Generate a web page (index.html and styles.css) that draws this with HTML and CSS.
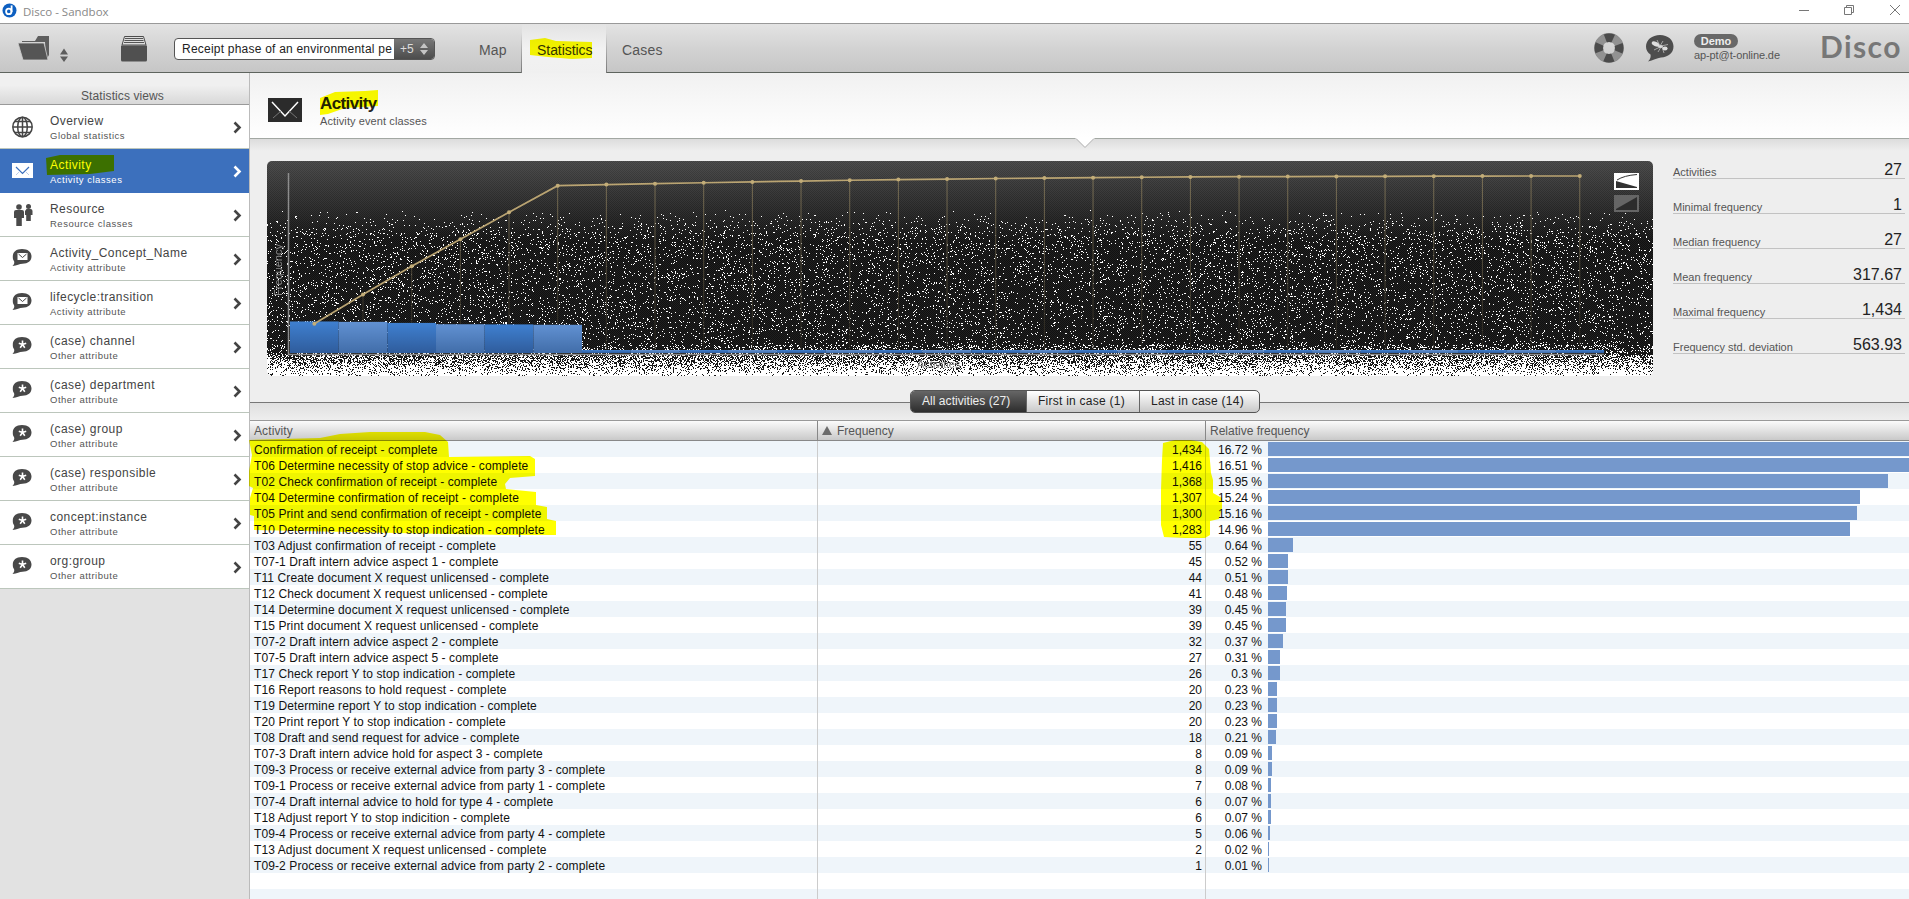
FILE: index.html
```html
<!DOCTYPE html>
<html lang="en">
<head>
<meta charset="utf-8">
<title>Disco - Sandbox</title>
<link rel="stylesheet" href="styles.css">
</head>
<body>
<div class="app">
  <header class="titlebar">
    <svg class="app-icon" width="15" height="15" viewBox="0 0 15 15"><circle cx="7.5" cy="7.5" r="7" fill="#0d5fc0"/><circle cx="6.8" cy="8.4" r="2.7" fill="none" stroke="#fff" stroke-width="1.8"/><path d="M9.6 2.4V9" stroke="#fff" stroke-width="1.8"/></svg>
    <span class="app-name">Disco - Sandbox</span>
    <svg class="win-controls" width="112" height="12" viewBox="0 0 112 12" fill="none" stroke="#777"><path d="M0 6.5H10"/><path d="M45.500 3.500H52.500V10.500H45.500ZM47.500 3.500V1.500H54.500V8.500H52.500"/><path d="M91 1L101 11M101 1L91 11"/></svg>
  </header>

  <div class="toolbar">
    <svg class="ic-folder" width="52" height="28" viewBox="0 0 52 28"><path d="M4 6H17L20 1H31V20L28 25L27 7H4Z" fill="#5e5e5e"/><path d="M0 8H26L30 25H5Z" fill="#555" stroke="#cfcfcf" stroke-width=".8"/><path d="M42 19.500L46 13.500L50 19.500ZM42 21.500L46 27L50 21.500Z" fill="#5c5c5c"/></svg>
    <svg class="ic-box" width="26" height="26" viewBox="0 0 26 26"><path d="M3.500 .5H22.500L25 9H1Z" fill="#ddd" stroke="#4c4c4c"/><path d="M4 2.500H22M3.500 4.500H22.500M3 6.500H23" stroke="#555"/><path d="M0 9.500H26V24Q26 25.500 24.500 25.500H1.500Q0 25.500 0 24Z" fill="#505050"/></svg>
    <div class="dataset"><span class="dataset-name">Receipt phase of an environmental pe</span><span class="dataset-more">+5<svg width="8" height="12" viewBox="0 0 8 12"><path d="M0 5L4 0L8 5ZM0 7L4 12L8 7Z" fill="#c4c4c4"/></svg></span></div>
    <nav class="tabs"><span class="tab tab-map">Map</span><span class="tab tab-on">Statistics</span><span class="tab tab-cases">Cases</span></nav>
    <svg class="ic-help" width="30" height="30" viewBox="0 0 30 30"><circle cx="15" cy="15" r="14.300" fill="none" stroke="#8b8b8b" stroke-width="1.200"/><circle cx="15" cy="15" r="10.200" fill="none" stroke="#919191" stroke-width="8"/><circle cx="15" cy="15" r="10.200" fill="none" stroke="#4b4b4b" stroke-width="8.600" stroke-dasharray="8.010 8.010" stroke-dashoffset="4.005"/></svg>
    <svg class="ic-bug" width="28" height="27" viewBox="0 0 28 27"><path d="M14 0C22 0 27.500 5 27.500 11.500C27.500 18 22 22 15 22.500C11 23 7 25.500 2 26.500C4.500 24 5 21.500 4.500 19.500C1.500 17.500 0 15 0 11.500C0 5 6 0 14 0Z" fill="#4d4d4d"/><g fill="#ddd"><ellipse cx="9.500" cy="9" rx="4" ry="2.200" transform="rotate(24 9.500 9)"/><ellipse cx="14.500" cy="11.500" rx="2.500" ry="1.500"/><ellipse cx="19" cy="13.500" rx="2.600" ry="2"/></g><path d="M14 11L11 5M14 11L17 6M15 11L22 9.500M14 12L8 15M15 12L12 17M16 12L18 18" stroke="#ccc" stroke-width=".7"/></svg>
    <div class="account"><b class="badge">Demo</b><span class="mail">ap-pt@t-online.de</span></div>
    <div class="logo">Disco</div>
  </div>

  <div class="body">
    <aside class="sidebar">
      <div class="side-head">Statistics views</div>
      <div id="views"></div>
    </aside>
    <main class="main">
      <div class="head">
        <svg class="head-icon" width="34" height="24" viewBox="0 0 34 24"><path d="M0 0H34V24H0Z" fill="#2b2b2b"/><path d="M4 4L17 18L30 4" stroke="#fff" stroke-width="1.500" fill="none"/><path d="M5 20L13 13M29 20L21 13" stroke="#888" stroke-width=".8"/></svg>
        <div class="head-text"><h1>Activity</h1><p>Activity event classes</p></div>
        <svg class="notch" width="20" height="11" viewBox="0 0 20 11"><path d="M0 0H20L10 10Z" fill="#fff"/><path d="M1 .5L10 9.500L19 .5" fill="none" stroke="#a5a5a5"/></svg>
      </div>
      <div class="overview">
        <div class="chart"><canvas id="grain" width="1386" height="215"></canvas><svg id="plot" width="1386" height="215" viewBox="267 161 1386 215"></svg></div>
        <dl class="stats">
          <div><dt>Activities</dt><dd>27</dd></div>
          <div><dt>Minimal frequency</dt><dd>1</dd></div>
          <div><dt>Median frequency</dt><dd>27</dd></div>
          <div><dt>Mean frequency</dt><dd>317.67</dd></div>
          <div><dt>Maximal frequency</dt><dd>1,434</dd></div>
          <div><dt>Frequency std. deviation</dt><dd>563.93</dd></div>
        </dl>
      </div>
      <div class="switch"><i class="rule"></i><div class="segments"><span class="seg seg-on">All activities (27)</span><span class="seg">First in case (1)</span><span class="seg">Last in case (14)</span></div><i class="rule"></i></div>
      <div class="table">
        <div class="row thead"><span class="c1">Activity</span><span class="c2"><svg width="10" height="9" viewBox="0 0 10 9"><path d="M0 9L5 0L10 9Z" fill="#6b6b6b"/></svg>Frequency</span><span class="c3">Relative frequency</span></div>
        <div id="rows"></div>
      </div>
    </main>
  </div>

  <svg class="marker" width="1909" height="899" viewBox="0 0 1909 899" fill="#ff0">
    <path d="M530 40L545 38L556 41L592 42V58L572 59L548 57L530 55Z"/>
    <path d="M320 98L335 92L365 91L378 90V106L345 108L328 114L320 115Z"/>
    <path d="M46 158L60 155H114V171L90 174L47 175Z"/>
    <path d="M249 440L320 438L340 434L370 432H425L440 435L448 442L449 457L530 456L535 459V476L510 478L505 484L506 489L536 492V505L547 507V519L556 521V535H505L395 533L254 530V516L250 515V498L253 488L249 486V471L252 455Z"/>
    <path d="M1163 443L1175 440H1190L1202 442L1209 449L1211 473L1213 480V493L1222 498V508L1219 519L1210 521V535L1205 538H1185L1164 537L1161 525V490L1162 460Z"/>
  </svg>
</div>
<script src="app.js"></script>
</body>
</html>
```

FILE: styles.css
```css
* { box-sizing: border-box; }
body { margin: 0; background: #fff; font-family: "Liberation Sans", Arial, sans-serif; color: #444; overflow: hidden; }
.app { position: relative; width: 1909px; height: 899px; overflow: hidden; display: flex; flex-direction: column; }
svg, canvas { display: block; flex: none; }

.titlebar { height: 23px; display: flex; align-items: center; padding-left: 2px; }
.app-icon { margin-top: -2px; }
.app-name { margin-left: 6px; font: 11.500px/16px "Open Sans", sans-serif; color: #888; }
.win-controls { margin: -4px -2px 0 auto; }

.toolbar { height: 50px; display: flex; border-top: 1px solid #999; border-bottom: 1px solid #5e645e; background: linear-gradient(#e3e3e3, #d3d3d3 50%, #c6c6c6); }
.ic-folder { margin: 11px 0 0 18px; }
.ic-box { margin: 12px 0 0 51px; }
.dataset { margin: 14px 0 0 27px; width: 261px; height: 22px; display: flex; border: 1px solid #555; border-radius: 4px; overflow: hidden; background: #fff; font-size: 12px; line-height: 21px; color: #222; }
.dataset-name { flex: none; width: 219px; padding-left: 7px; white-space: nowrap; letter-spacing: .22px; }
.dataset-more { flex: 1; display: flex; align-items: center; gap: 6px; padding-left: 6px; color: #ddd; font-size: 12px; background: linear-gradient(#777, #4c4c4c); }
.tabs { display: flex; margin-left: 43px; height: 49px; font-size: 14px; line-height: 52px; letter-spacing: .2px; color: #555; }
.tab-map { width: 44px; padding-left: 1px; border-right: 1px solid #777; border-image: linear-gradient(transparent 20%, #777) 1; }
.tab-on { width: 84px; padding-left: 15px; color: #333; background: linear-gradient(#e3e3e3, #f2f2f2 50%, #f0f0f0); letter-spacing: -.05px; }
.tab-cases { padding-left: 15px; border-left: 1px solid #777; border-image: linear-gradient(transparent 20%, #777) 1; }
.ic-help { margin: 9px 0 0 auto; }
.ic-bug { margin: 11px 0 0 22px; }
.account { margin: 10px 0 0 20px; width: 126px; display: flex; flex-direction: column; align-items: flex-start; font-size: 11px; color: #555; }
.badge { width: 44px; height: 14px; border-radius: 7px; background: #686868; color: #eee; text-align: center; line-height: 14px; }
.mail { line-height: 14px; letter-spacing: -.1px; }
.logo { width: 89px; font: bold 30px/48px Lato, sans-serif; color: #777; letter-spacing: 1.400px; margin-top: -2px; }

.body { flex: 1; display: flex; min-height: 0; }
.sidebar { width: 249px; background: #e2e2e2; }
.side-head { height: 32px; line-height: 46px; padding-right: 4px; text-align: center; font-size: 12px; letter-spacing: .1px; color: #555; background: linear-gradient(#f0f0f0 40%, #d8d8d8); border-bottom: 1px solid #999; }
.view { height: 44px; display: flex; background: #fff; border-bottom: 1px solid #bcc6bc; }
.view-icon { width: 50px; padding: 11px 0 0 12px; }
.view-text { width: 183px; padding-top: 8px; }
.view-text b { display: block; font-weight: normal; font-size: 12px; line-height: 16px; letter-spacing: .45px; white-space: nowrap; color: #444; }
.view-text small { display: block; font-size: 9.500px; line-height: 14px; letter-spacing: .5px; color: #555; }
.chev { margin-top: 16px; }
.view-on { background: #3c70bd; border-color: #3c70bd; }
.view-on .view-text b, .view-on .view-text small { color: #fff; }

.main { flex: 1; min-width: 0; border-left: 1px solid #bbb; background: #eee; display: flex; flex-direction: column; }
.head { position: relative; height: 66px; border-bottom: 1px solid #a3a8a3; background: linear-gradient(#f1f1f1, #fff); display: flex; }
.head-icon { margin: 25px 0 0 18px; }
.head-text { margin: 20px 0 0 18px; }
.head-text h1 { margin: 0; font-size: 17px; line-height: 22px; letter-spacing: -.6px; color: #222; }
.head-text p { margin: 0; font-size: 11px; line-height: 13px; letter-spacing: .1px; color: #555; }
.notch { position: absolute; left: 825px; top: 65px; }
.overview { height: 251px; padding: 22px 4px 0 17px; display: flex; justify-content: space-between; background: linear-gradient(#dcdcdc, #eee 12px); }
.chart { position: relative; width: 1386px; height: 215px; border-radius: 5px; overflow: hidden; }
.chart svg { position: absolute; left: 0; top: 0; }
.stats { margin: 0; width: 232px; }
.stats div { height: 35px; padding-bottom: 17px; display: flex; justify-content: space-between; align-items: center; position: relative; background: linear-gradient(#c2c2c2, #c2c2c2) 0 17px / 100% 1px no-repeat; }
.stats dt { font-size: 11px; line-height: 14px; padding-top: 3px; color: #555; }
.stats dd { margin: 0 3px 0 0; font-size: 16px; line-height: 18px; color: #222; }
.switch { height: 30px; display: flex; background: linear-gradient(#eee 40%, #dfdfdf 41%, #eee); }
.rule { height: 1px; background: #777; margin-top: 12px; flex: 1; }
.rule:first-child { flex: 0 0 660px; }
.segments { display: flex; width: 350px; height: 23px; border: 1px solid #555; border-radius: 5px; overflow: hidden; font-size: 12px; line-height: 21px; color: #222; background: linear-gradient(#fff, #c9c9c9); }
.seg { flex: 0 0 113px; padding-left: 11px; letter-spacing: .25px; white-space: nowrap; border-right: 1px solid #666; }
.seg:last-child { border: 0; }
.seg-on { flex-basis: 116px; letter-spacing: .05px; color: #eee; background: linear-gradient(#666, #2d2d2d); }

.table { flex: 1; min-height: 0; overflow: hidden; background: #fff; }
.row { display: flex; height: 16px; font-size: 12px; line-height: 18px; color: #111; white-space: nowrap; }
.row:nth-child(odd) { background: #eff5fa; }
.row > span { flex: none; }
.c1 { width: 567px; padding-left: 4px; letter-spacing: .1px; }
.c2 { width: 388px; padding-right: 3px; text-align: right; border-left: 1px solid #ccc; }
.c3 { width: 704px; display: flex; border-left: 1px solid #ccc; overflow: hidden; }
.pct { flex: none; width: 56px; text-align: right; }
.bar { flex: none; height: 14px; margin: 1px 0 0 6px; background: #7598cc; }
.row.thead { height: 21px; line-height: 20px; color: #555; border-top: 1px solid #999; border-bottom: 1px solid #888; background: linear-gradient(#fbfbfb, #c9c9c9); }
.thead .c2 { display: flex; align-items: center; gap: 5px; padding-left: 4px; border-color: #888; }
.thead .c3 { padding-left: 4px; border-color: #888; }
.marker { position: absolute; left: 0; top: 0; mix-blend-mode: multiply; pointer-events: none; }
.axis-label { font: 11px "Liberation Sans", sans-serif; fill: #8a8a8a; }
```

FILE: app.js
```js
const speech = 'M10 1C16 1 19.500 4 19.500 8.500C19.500 13 16 15.500 10.500 15.800C7.500 16 5 17.500 .5 18C2.500 16 2.500 14.500 2 13C.8 11.500 .8 10 .8 8.500C.8 4 4 1 10 1Z';
const icons = {
  globe: '<g fill="none" stroke="#444" stroke-width="1.500"><circle cx="10.500" cy="11" r="9.700"/><ellipse cx="10.500" cy="11" rx="4.800" ry="9.700"/><path d="M10.500 1V21M1 11H20M3 5.500H18M3 16.500H18"/></g>',
  mail: '<path d="M0 3H21V18H0Z" fill="#fff"/><path d="M4 7L10.500 13.500L17 7" fill="none" stroke="#3c70bd" stroke-width="1.200"/><path d="M4 15L7 12M17 15L14 12" stroke="#a9c0e2" stroke-width=".8"/>',
  people: '<g fill="#4a4a4a"><circle cx="7" cy="3" r="2.800"/><path d="M4 6H10Q12 6 12 8V14H9.800V22H4.300V14H2V8Q2 6 4 6Z"/><circle cx="16.500" cy="2.500" r="2.500"/><path d="M14.500 5H18.500Q20.500 5 20.500 7V11H18.800V17H14.200V11H13V7Z"/></g>',
  attr: '<path d="' + speech + '" fill="#484848"/><path d="M5.500 5H15.500V12H5.500Z" fill="#fff"/><path d="M6.500 6L10.500 9.500L14.500 6" fill="none" stroke="#484848"/>',
  other: '<path d="' + speech + '" fill="#484848"/><path d="M10.500 8.500V4.500M10.500 8.500L6.800 7.300M10.500 8.500L14.200 7.300M10.500 8.500L8.200 11.700M10.500 8.500L12.800 11.700" fill="none" stroke="#fff" stroke-width="1.600"/>'
};
const views = [
  ['globe', 'Overview', 'Global statistics'], ['mail', 'Activity', 'Activity classes'],
  ['people', 'Resource', 'Resource classes'], ['attr', 'Activity_Concept_Name', 'Activity attribute'],
  ['attr', 'lifecycle:transition', 'Activity attribute'], ['other', '(case) channel', 'Other attribute'],
  ['other', '(case) department', 'Other attribute'], ['other', '(case) group', 'Other attribute'],
  ['other', '(case) responsible', 'Other attribute'], ['other', 'concept:instance', 'Other attribute'],
  ['other', 'org:group', 'Other attribute']
];
document.getElementById('views').innerHTML = views.map(([icon, name, sub], i) =>
  `<div class="view${i === 1 ? ' view-on' : ''}"><span class="view-icon"><svg width="22" height="22">${icons[icon]}</svg></span><span class="view-text"><b>${name}</b><small>${sub}</small></span><svg class="chev" width="9" height="13" viewBox="0 0 9 13"><path d="M1.500 1.500L6.500 6.500L1.500 11.500" fill="none" stroke="${i === 1 ? '#fff' : '#444'}" stroke-width="2.600"/></svg></div>`).join('');

const data = [
  ['Confirmation of receipt', 1434, '16.72'], ['T06 Determine necessity of stop advice', 1416, '16.51'],
  ['T02 Check confirmation of receipt', 1368, '15.95'], ['T04 Determine confirmation of receipt', 1307, '15.24'],
  ['T05 Print and send confirmation of receipt', 1300, '15.16'], ['T10 Determine necessity to stop indication', 1283, '14.96'],
  ['T03 Adjust confirmation of receipt', 55, '0.64'], ['T07-1 Draft intern advice aspect 1', 45, '0.52'],
  ['T11 Create document X request unlicensed', 44, '0.51'], ['T12 Check document X request unlicensed', 41, '0.48'],
  ['T14 Determine document X request unlicensed', 39, '0.45'], ['T15 Print document X request unlicensed', 39, '0.45'],
  ['T07-2 Draft intern advice aspect 2', 32, '0.37'], ['T07-5 Draft intern advice aspect 5', 27, '0.31'],
  ['T17 Check report Y to stop indication', 26, '0.3'], ['T16 Report reasons to hold request', 20, '0.23'],
  ['T19 Determine report Y to stop indication', 20, '0.23'], ['T20 Print report Y to stop indication', 20, '0.23'],
  ['T08 Draft and send request for advice', 18, '0.21'], ['T07-3 Draft intern advice hold for aspect 3', 8, '0.09'],
  ['T09-3 Process or receive external advice from party 3', 8, '0.09'], ['T09-1 Process or receive external advice from party 1', 7, '0.08'],
  ['T07-4 Draft internal advice to hold for type 4', 6, '0.07'], ['T18 Adjust report Y to stop indicition', 6, '0.07'],
  ['T09-4 Process or receive external advice from party 4', 5, '0.06'], ['T13 Adjust document X request unlicensed', 2, '0.02'],
  ['T09-2 Process or receive external advice from party 2', 1, '0.01']
];
const blank = '<div class="row"><span class="c1"></span><span class="c2"></span><span class="c3"></span></div>';
document.getElementById('rows').innerHTML = data.map(([name, n, pct]) =>
  `<div class="row"><span class="c1">${name} - complete</span><span class="c2">${n.toLocaleString('en-US')}</span><span class="c3"><span class="pct">${pct} %</span><i class="bar" style="width:${Math.max(1, n * 0.4532).toFixed(1)}px"></i></span></div>`).join('') + blank + blank;

const step = 48.67, total = data.reduce((s, d) => s + d[1], 0);
let bars = '', drops = '', dots = '', line = '', cum = 0;
data.forEach(([, n], i) => {
  cum += n;
  const h = n > 100 ? n * 0.022 : 3, x = 290 + i * step, px = x + step / 2, py = 353.5 - 177.5 * cum / total;
  bars += `<rect x="${x}" y="${353 - h}" width="${step}" height="${h}" fill="url(#b${i % 2})"/>`;
  drops += `<path d="M${px} ${py}V${353 - h}" stroke="url(#drop)"/>`;
  dots += `<circle cx="${px}" cy="${py}" r="2" fill="#c3ad78"/>`;
  line += (i ? 'L' : 'M') + px + ' ' + py;
});
document.getElementById('plot').innerHTML = `<defs>
<linearGradient id="b0" x2="0" y2="1"><stop stop-color="#3f80d0"/><stop offset="1" stop-color="#2f5c9c"/></linearGradient>
<linearGradient id="b1" x2="0" y2="1"><stop stop-color="#6191d2"/><stop offset="1" stop-color="#416da9"/></linearGradient>
<linearGradient id="drop" gradientUnits="userSpaceOnUse" x1="0" y1="176" x2="0" y2="350"><stop stop-color="#7d7257"/><stop offset="1" stop-color="#26231d"/></linearGradient></defs>
${drops}${bars}<path d="M288.500 173V354.500H1604" fill="none" stroke="#8d8d8d" stroke-width="1.500"/>
<path d="${line}" fill="none" stroke="#baa472" stroke-width="1.700"/>${dots}
<text class="axis-label" transform="translate(282 296) rotate(-90)">Frequency</text><text class="axis-label" x="917" y="368">Activities</text>
<path d="M1614 173H1639V190H1614Z" fill="#fff"/><path d="M1616 181L1637 187V188H1616Z" fill="#333"/><path d="M1617 180Q1624 175.500 1637 174.500" fill="none" stroke="#333"/>
<path d="M1614 195H1639V212H1614Z" fill="#656565"/><path d="M1616 209L1637 197V210H1616Z" fill="#2c2c2c"/>`;

/* Panel texture: dark gradient with a grain that thickens towards the lower edge. */
const ctx = document.getElementById('grain').getContext('2d');
const img = ctx.createImageData(1386, 215);
let seed = 7;
const rnd = () => {
  seed = (seed + 0x6D2B79F5) >>> 0;
  let t = Math.imul(seed ^ (seed >>> 15), seed | 1);
  t ^= t + Math.imul(t ^ (t >>> 7), t | 61);
  return ((t ^ (t >>> 14)) >>> 0) / 4294967296;
};
for (let y = 0; y < 215; y++) {
  let p = 0;
  if (y > 48) p = Math.min(0.07, (y - 48) * 0.003);
  if (y > 183) p = 0.2;
  if (y > 193) p = 0.38 + (y - 193) * 0.026;
  const base = y < 50 ? 72 - y * 0.6 : Math.max(24, 42 - (y - 50) * 0.6);
  for (let x = 0; x < 1386; x++) {
    const k = (y * 1386 + x) * 4, v = rnd() < p ? 255 : base + (((x + y) & 1) ? 6 : -6);
    img.data[k] = img.data[k + 1] = img.data[k + 2] = v;
    img.data[k + 3] = 255;
  }
}
ctx.putImageData(img, 0, 0);
```
